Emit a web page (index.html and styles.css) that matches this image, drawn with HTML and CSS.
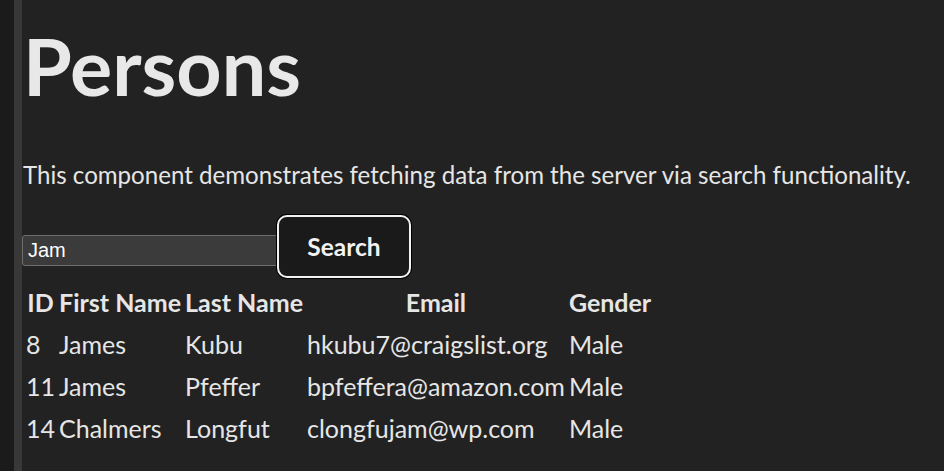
FILE: index.html
```html
<!DOCTYPE html>
<html>
<head>
<meta charset="utf-8">
<link rel="stylesheet" href="styles.css">
</head>
<body>
<div class="layout">
  <div class="sidebar"></div>
  <div class="rail"></div>
  <main class="content">
    <h1 class="title">Persons</h1>
    <p class="intro">This component demonstrates fetching data from the server via search functionality.</p>
    <div class="search-row">
      <input class="search-input" type="text" value="Jam">
      <button class="search-btn">Search</button>
    </div>
    <table class="persons">
      <thead>
        <tr><th>ID</th><th>First Name</th><th>Last Name</th><th>Email</th><th>Gender</th></tr>
      </thead>
      <tbody>
        <tr><td>8</td><td>James</td><td>Kubu</td><td>hkubu7@craigslist.org</td><td>Male</td></tr>
        <tr><td>11</td><td>James</td><td>Pfeffer</td><td>bpfeffera@amazon.com</td><td>Male</td></tr>
        <tr><td>14</td><td>Chalmers</td><td>Longfut</td><td>clongfujam@wp.com</td><td>Male</td></tr>
      </tbody>
    </table>
  </main>
</div>
</body>
</html>
```

FILE: styles.css
```css
html, body {
  margin: 0;
  height: 100%;
  background: #222222;
}
.layout {
  display: flex;
  min-height: 100%;
  font-family: Lato, "Open Sans", sans-serif;
  color: #e6e6e6;
}
.sidebar {
  width: 14px;
  background: #1b1b1b;
  flex: none;
}
.rail {
  width: 8px;
  background: #383838;
  flex: none;
}
.content {
  flex: 1;
  padding-left: 1px;
  background: #222222;
}
.title {
  margin: 18px 0 0 0;
  font-size: 79px;
  font-weight: 700;
  line-height: 96px;
  color: #e8e8e8;
}
.intro {
  margin: 46px 0 0 0;
  font-size: 24.1px;
  line-height: 30px;
  white-space: nowrap;
}
.search-row {
  display: flex;
  align-items: flex-end;
  margin-top: 25px;
}
.search-input {
  width: 256px;
  height: 31px;
  box-sizing: border-box;
  margin: 0 0 12px -1px;
  padding: 0 5px;
  background: #3b3b3b;
  border: 1px solid #6d6d6d;
  border-radius: 3px;
  color: #ffffff;
  font-family: "Liberation Sans", Arial, sans-serif;
  font-size: 20px;
}
.search-btn {
  width: 134px;
  height: 63px;
  box-sizing: border-box;
  margin-left: -1px;
  background: #1a1a1a;
  border: 2px solid #f2f2f2;
  border-radius: 10px;
  box-shadow: 0 0 0 1px #000;
  color: #f2f2f2;
  font-family: Lato, "Open Sans", sans-serif;
  font-size: 24.5px;
  font-weight: 700;
}
.persons {
  margin-top: 2px;
  border-spacing: 2px;
  font-size: 25px;
}
.persons th, .persons td {
  padding: 1px;
  line-height: 38px;
}
.persons th {
  font-weight: 700;
}
.persons td {
  text-align: left;
}
```
